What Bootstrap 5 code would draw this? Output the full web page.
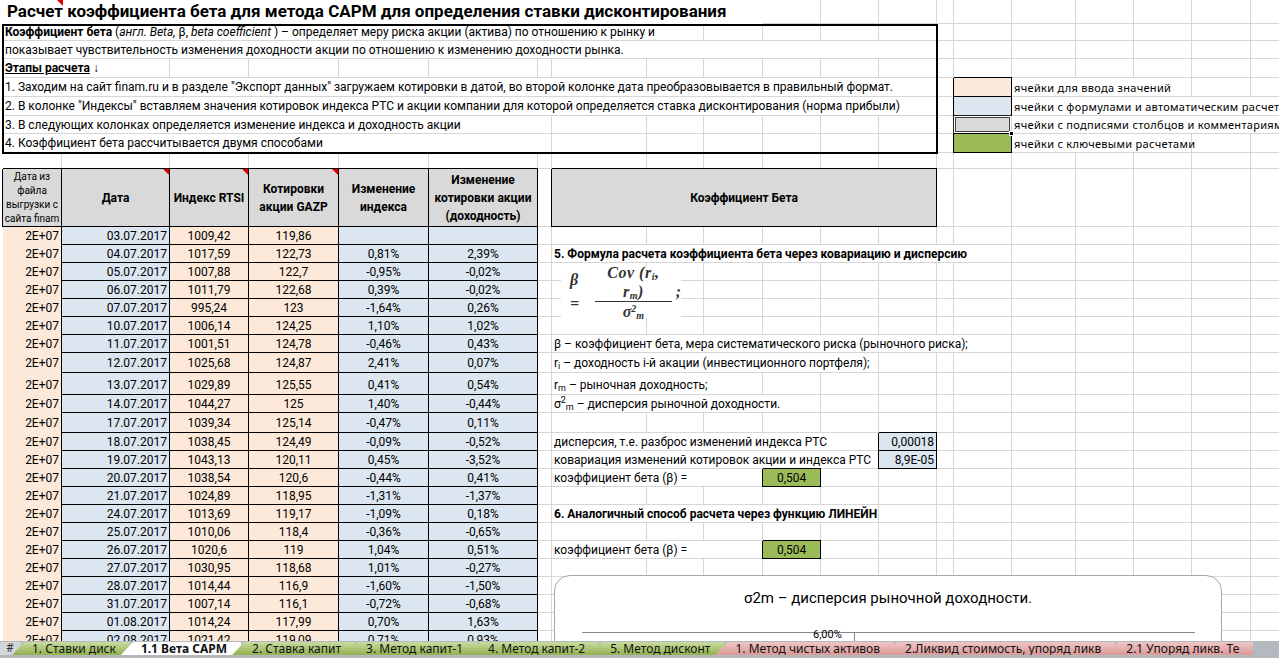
<!DOCTYPE html>
<html lang="ru">
<head>
    <meta charset="UTF-8">
    <meta name="viewport" content="width=device-width, initial-scale=1.0">
    <title>Расчет коэффициента бета</title>
    <link href="https://cdn.jsdelivr.net/npm/bootstrap@5.3.0/dist/css/bootstrap.min.css" rel="stylesheet">
    <style>
        body { font-family: Roboto, "Liberation Sans", sans-serif; font-size: 12px; color: #000; background: #fff; }
        .sheet-area { flex: 1 1 0; min-height: 0; }
        .grid-sheet { table-layout: fixed; width: 1309px; border-collapse: separate; border-spacing: 0; }
        .grid-sheet td { padding: 0 2px; border-right: 1px solid #d6d6d6; border-bottom: 1px solid #d6d6d6; white-space: nowrap; vertical-align: middle; line-height: 1; position: relative; }
        .grid-sheet td.wrap-cell { white-space: normal; line-height: 18px; }
        .grid-sheet td.wrap-small { white-space: normal; font-size: 10px; line-height: 14px; padding: 0 1px; }
        .grid-sheet td.no-line { border-color: transparent; }
        .grid-sheet td.no-right { border-right-color: transparent; }
        .grid-sheet td.blk { border-right-color: #000; border-bottom-color: #000; box-shadow: -1px 0 0 #000, 0 -1px 0 #000; }
        .grid-sheet tr.low-row td { vertical-align: bottom; padding-bottom: 3px; }
        .bg-input { background: #fde9d9; }
        .bg-calc { background: #dce6f1; }
        .bg-head { background: #d9d9d9; }
        .bg-key { background: #9bbb59; }
        .title-text { font-size: 17px; font-weight: 700; padding-left: 4px !important; }
        .legend-text { font-family: "Noto Sans", sans-serif; font-size: 11px; letter-spacing: .3px; }
        .red-flag { position: absolute; top: 0; right: 0; width: 0; height: 0; border-top: 6px solid #e00000; border-left: 6px solid transparent; }
        .red-flag-title { right: auto; left: 54px; }
        .grid-sheet td.picked { box-shadow: inset 0 0 0 1px #fff, inset 0 0 0 2px #444, -1px 0 0 #222, 0 -1px 0 #222; }
        .fill-handle { position: absolute; right: -3px; bottom: -3px; width: 5px; height: 5px; background: #000; border: 1px solid #fff; z-index: 2; }
        .note-frame { left: 2px; top: 24px; width: 936px; height: 130px; border: 2px solid #000; pointer-events: none; }
        .formula-box { left: 561px; top: 266px; width: 120px; height: 52px; background: #fff; font-family: "Liberation Serif", serif; font-style: italic; font-size: 16px; font-weight: 700; color: #333; padding-left: 9px; }
        .formula-frac { border-bottom: 1px solid #333; text-align: center; line-height: 19px; letter-spacing: .5px; }
        .formula-den { text-align: center; line-height: 20px; }
        .formula-box sub, .formula-box sup { font-size: 10px; }
        .chart-panel { left: 554px; top: 575px; width: 668px; height: 300px; border: 1px solid #a6a6a6; border-radius: 16px; background: #fff; }
        .chart-title { top: 11px; left: 0; right: 0; font-size: 15px; text-align: center; }
        .chart-rule { top: 56px; left: 27px; width: 613px; height: 1px; background: #868686; }
        .chart-axis { top: 56px; left: 299px; width: 1px; height: 120px; background: #868686; }
        .chart-tick { top: 51px; left: 258px; font-size: 11px; }
        .chart-label { top: 60px; left: 137px; font-size: 11px; font-weight: 700; }
        .tab-strip { height: 17px; flex: none; background: #b4b9bf; padding: 1px 0 3px; }
        .tab-hash { width: 21px; padding-left: 6px; background: #d3d6da; line-height: 13px; color: #333; }
        .sheet-tab { flex: none; height: 13px; line-height: 13px; font-family: "Noto Sans", sans-serif; font-size: 12px; margin-left: -9px; padding: 0 14px 0 20px; clip-path: polygon(0 100%, 12px 0, 100% 0, 100% 100%); color: #111; }
        .tab-green { background: linear-gradient(#c9dca0, #92b04f); }
        .tab-pink { background: linear-gradient(#eec6c5, #dc9997); }
        .tab-active { background: #fff; font-weight: 700; }
    </style>
</head>
<body class="overflow-hidden">

    <div class="d-flex flex-column vh-100">
        <div class="sheet-area position-relative overflow-hidden">
            <table class="grid-sheet" id="sheet"><colgroup id="cols"></colgroup><tbody id="sheetBody"></tbody></table>

            <div class="note-frame position-absolute"></div>

            <div class="formula-box position-absolute d-flex align-items-center gap-1">
                <span>β =</span>
                <div>
                    <div class="formula-frac">Cov (r<sub>i</sub>, r<sub>m</sub>)</div>
                    <div class="formula-den">σ<sup>2</sup><sub>m</sub></div>
                </div>
                <span>;</span>
            </div>

            <div class="chart-panel card position-absolute overflow-hidden">
                <div class="chart-title position-absolute">σ2m – дисперсия рыночной доходности.</div>
                <div class="chart-rule position-absolute"></div>
                <div class="chart-axis position-absolute"></div>
                <div class="chart-tick position-absolute">6,00%</div>
                <div class="chart-label position-absolute">изменение стоимости</div>
            </div>
        </div>

        <nav class="nav tab-strip flex-nowrap overflow-hidden">
            <span class="tab-hash">#</span>
            <span class="sheet-tab tab-green">1. Ставки диск</span>
            <span class="sheet-tab tab-active">1.1 Вета САРМ</span>
            <span class="sheet-tab tab-green">2. Ставка капит</span>
            <span class="sheet-tab tab-green">3. Метод капит-1</span>
            <span class="sheet-tab tab-green">4. Метод капит-2</span>
            <span class="sheet-tab tab-green">5. Метод дисконт</span>
            <span class="sheet-tab tab-pink">1. Метод чистых активов</span>
            <span class="sheet-tab tab-pink">2.Ликвид стоимость, упоряд ликв</span>
            <span class="sheet-tab tab-pink">2.1 Упоряд ликв. Те</span>
        </nav>
    </div>

    <script src="https://cdn.jsdelivr.net/npm/bootstrap@5.3.0/dist/js/bootstrap.bundle.min.js"></script>
    <script>
        const edges = [0, 3, 62, 170, 249, 339, 429, 538, 552, 647, 704, 763, 821, 879, 937, 954, 1012, 1076, 1134, 1192, 1251, 1309];
        const body = document.getElementById("sheetBody");
        const cols = document.getElementById("cols");
        const flag = '<span class="red-flag"></span>';

        for (let i = 0; i < edges.length - 1; i++) {
            const col = document.createElement("col");
            col.style.width = (edges[i + 1] - edges[i]) + "px";
            cols.appendChild(col);
        }

        // spec: [first column, span, classes, html]
        function addRow(height, spec, rowClass) {
            const tr = document.createElement("tr");
            tr.style.height = height + "px";
            if (rowClass) tr.className = rowClass;
            for (let c = 0; c < edges.length - 1;) {
                const s = spec.find(x => x[0] === c);
                const td = document.createElement("td");
                if (s) {
                    td.colSpan = s[1];
                    td.className = s[2] || "";
                    td.innerHTML = s[3] || "";
                    c += s[1];
                } else {
                    if (c === 0) td.className = "no-line";
                    c++;
                }
                tr.appendChild(td);
            }
            body.appendChild(tr);
        }

        const legend = (cls, text, span, extra) => [
            [15, 1, "blk " + cls, extra || ""],
            [16, span, "legend-text", text]
        ];

        addRow(24, [[1, 10, "title-text no-line", '<span class="red-flag red-flag-title"></span>Расчет коэффициента бета для метода САРМ для определения ставки дисконтирования']]);
        addRow(17, [[1, 9, "", "<b>Коэффициент бета</b> (<i>англ. Beta,</i> β, <i>beta coefficient</i> ) – определяет меру риска акции (актива) по отношению к рынку и"]]);
        addRow(18, [[1, 13, "", "показывает чувствительность изменения доходности акции по отношению к изменению доходности рынка."]]);
        addRow(19, [[1, 1, "no-right", '<b class="text-decoration-underline">Этапы расчета</b> <b>↓</b>']]);
        addRow(19, [[1, 13, "", '1. Заходим на сайт finam.ru и в разделе "Экспорт данных" загружаем котировки в датой, во второй колонке дата преобразовывается в правильный формат.'], ...legend("bg-input", "ячейки для ввода значений", 3)]);
        addRow(19, [[1, 13, "", '2. В колонке "Индексы" вставляем значения котировок индекса РТС и акции компании для которой определяется ставка дисконтирования (норма прибыли)'], ...legend("bg-calc", "ячейки с формулами и автоматическим расчетом", 5)]);
        addRow(18, [[1, 7, "", "3. В следующих колонках определяется изменение индекса и доходность акции"], [15, 1, "picked bg-head", '<span class="fill-handle"></span>'], [16, 5, "legend-text", "ячейки с подписями столбцов и комментариями"]]);
        addRow(19, [[1, 7, "", "4. Коэффициент бета рассчитывается двумя способами"], ...legend("bg-key", "ячейки с ключевыми расчетами", 3)]);
        addRow(16, []);
        addRow(58, [
            [1, 1, "blk bg-head wrap-small text-center", "Дата из файла выгрузки с сайта finam"],
            [2, 1, "blk bg-head wrap-cell text-center fw-bold", flag + "Дата"],
            [3, 1, "blk bg-head wrap-cell text-center fw-bold", flag + "Индекс RTSI"],
            [4, 1, "blk bg-head wrap-cell text-center fw-bold", flag + "Котировки акции GAZP"],
            [5, 1, "blk bg-head wrap-cell text-center fw-bold", "Изменение индекса"],
            [6, 1, "blk bg-head wrap-cell text-center fw-bold", "Изменение котировки акции (доходность)"],
            [8, 6, "blk bg-head text-center fw-bold", "Коэффициент Бета"]
        ]);

        const quotes = [
            ["03.07.2017", "1009,42", "119,86", "", "", 18],
            ["04.07.2017", "1017,59", "122,73", "0,81%", "2,39%", 18],
            ["05.07.2017", "1007,88", "122,7", "-0,95%", "-0,02%", 18],
            ["06.07.2017", "1011,79", "122,68", "0,39%", "-0,02%", 18],
            ["07.07.2017", "995,24", "123", "-1,64%", "0,26%", 18],
            ["10.07.2017", "1006,14", "124,25", "1,10%", "1,02%", 18],
            ["11.07.2017", "1001,51", "124,78", "-0,46%", "0,43%", 18],
            ["12.07.2017", "1025,68", "124,87", "2,41%", "0,07%", 20],
            ["13.07.2017", "1029,89", "125,55", "0,41%", "0,54%", 22],
            ["14.07.2017", "1044,27", "125", "1,40%", "-0,44%", 18],
            ["17.07.2017", "1039,34", "125,14", "-0,47%", "0,11%", 20],
            ["18.07.2017", "1038,45", "124,49", "-0,09%", "-0,52%", 18],
            ["19.07.2017", "1043,13", "120,11", "0,45%", "-3,52%", 18],
            ["20.07.2017", "1038,54", "120,6", "-0,44%", "0,41%", 18],
            ["21.07.2017", "1024,89", "118,95", "-1,31%", "-1,37%", 18],
            ["24.07.2017", "1013,69", "119,17", "-1,09%", "0,18%", 18],
            ["25.07.2017", "1010,06", "118,4", "-0,36%", "-0,65%", 18],
            ["26.07.2017", "1020,6", "119", "1,04%", "0,51%", 18],
            ["27.07.2017", "1030,95", "118,68", "1,01%", "-0,27%", 18],
            ["28.07.2017", "1014,44", "116,9", "-1,60%", "-1,50%", 18],
            ["31.07.2017", "1007,14", "116,1", "-0,72%", "-0,68%", 18],
            ["01.08.2017", "1014,24", "117,99", "0,70%", "1,63%", 18],
            ["02.08.2017", "1021,42", "119,09", "0,71%", "0,93%", 18]
        ];

        // right hand block, by row index of the quotes
        const sideNotes = {
            1: [[8, 8, "fw-bold", "5. Формула расчета коэффициента бета через ковариацию и дисперсию"]],
            6: [[8, 8, "", "β – коэффициент бета, мера систематического риска (рыночного риска);"]],
            7: [[8, 5, "", "r<sub>i</sub> – доходность i-й акации (инвестиционного портфеля);"]],
            8: [[8, 3, "", "r<sub>m</sub> – рыночная доходность;"]],
            9: [[8, 4, "", "σ<sup>2</sup><sub>m</sub> – дисперсия рыночной доходности."]],
            11: [[8, 5, "", "дисперсия, т.е. разброс изменений индекса РТС"], [13, 1, "blk bg-calc text-end", "0,00018"]],
            12: [[8, 5, "", "ковариация изменений котировок акции и индекса РТС"], [13, 1, "blk bg-calc text-end", "8,9E-05"]],
            13: [[8, 3, "", "коэффициент бета (β) ="], [11, 1, "blk bg-key text-center", "0,504"]],
            15: [[8, 5, "fw-bold", "6. Аналогичный способ расчета через функцию ЛИНЕЙН"]],
            17: [[8, 3, "", "коэффициент бета (β) ="], [11, 1, "blk bg-key text-center", "0,504"]]
        };

        quotes.forEach((q, i) => {
            addRow(q[5], [
                [1, 1, "no-line bg-input text-end", "2E+07"],
                [2, 1, "blk bg-calc text-end", q[0]],
                [3, 1, "blk bg-input text-center", q[1]],
                [4, 1, "blk bg-input text-center", q[2]],
                [5, 1, "blk bg-calc text-center", q[3]],
                [6, 1, "blk bg-calc text-center", q[4]],
                ...(sideNotes[i] || [])
            ], i === 8 ? "low-row" : "");
        });
    </script>

</body>
</html>
